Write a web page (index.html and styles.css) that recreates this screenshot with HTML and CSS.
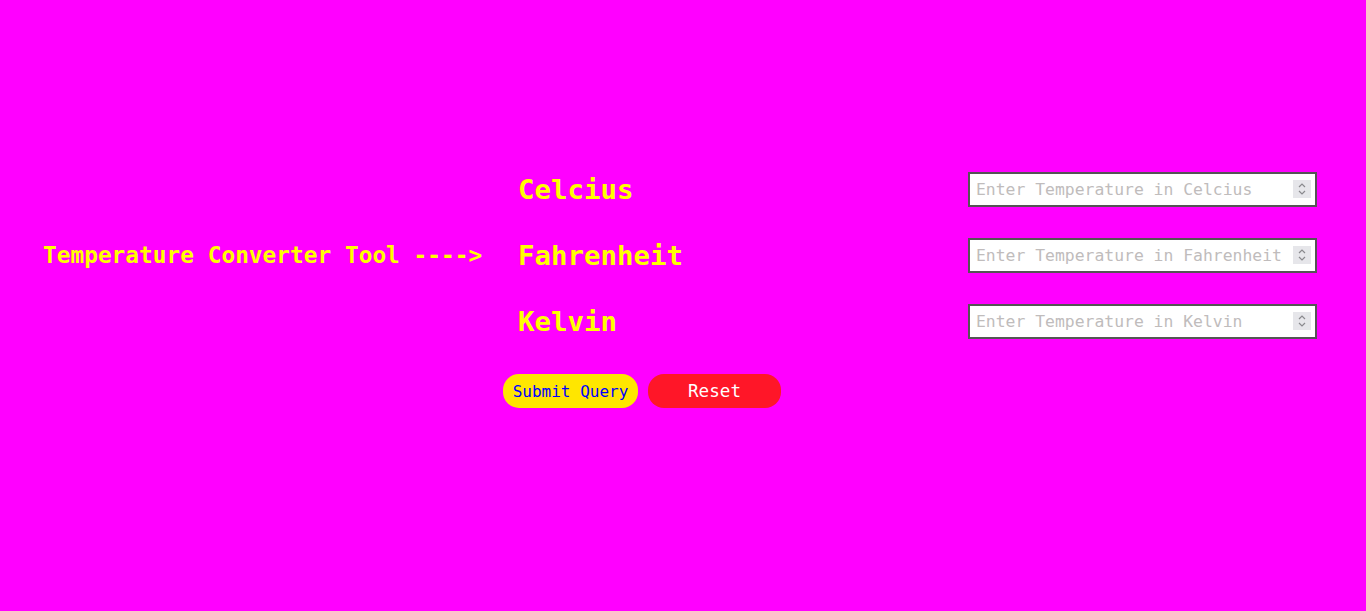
FILE: index.html
```html
<!DOCTYPE html>
<html>
<head>
<meta charset="utf-8">
<title>Temperature Converter</title>
<link rel="stylesheet" href="styles.css">
</head>
<body>
<main class="layout">
  <h1 class="title">Temperature Converter Tool ----&gt;</h1>
  <form class="form">
    <div class="row">
      <label class="label" for="c">Celcius</label>
      <span class="field-wrap">
        <input class="field" id="c" type="number" placeholder="Enter Temperature in Celcius">
        <span class="spin"><svg width="10" height="14" viewBox="0 0 10 14"><path d="M2 5 L5 2 L8 5 M2 9 L5 12 L8 9" fill="none" stroke="#8a8a8e" stroke-width="1.2"/></svg></span>
      </span>
    </div>
    <div class="row">
      <label class="label" for="f">Fahrenheit</label>
      <span class="field-wrap">
        <input class="field" id="f" type="number" placeholder="Enter Temperature in Fahrenheit">
        <span class="spin"><svg width="10" height="14" viewBox="0 0 10 14"><path d="M2 5 L5 2 L8 5 M2 9 L5 12 L8 9" fill="none" stroke="#8a8a8e" stroke-width="1.2"/></svg></span>
      </span>
    </div>
    <div class="row">
      <label class="label" for="k">Kelvin</label>
      <span class="field-wrap">
        <input class="field" id="k" type="number" placeholder="Enter Temperature in Kelvin">
        <span class="spin"><svg width="10" height="14" viewBox="0 0 10 14"><path d="M2 5 L5 2 L8 5 M2 9 L5 12 L8 9" fill="none" stroke="#8a8a8e" stroke-width="1.2"/></svg></span>
      </span>
    </div>
    <div class="buttons">
      <button class="btn submit" type="button">Submit Query</button>
      <button class="btn reset" type="reset">Reset</button>
    </div>
  </form>
</main>
</body>
</html>
```
FILE: styles.css
```css
html, body {
  margin: 0;
  padding: 0;
}
body {
  background: #ff00ff;
  font-family: "DejaVu Sans Mono", "Liberation Mono", monospace;
  height: 611px;
}
.layout {
  display: grid;
  grid-template-columns: 503px 814px;
  padding-top: 172px;
  align-items: start;
}
.title {
  margin: 66px 0 0 0;
  padding-left: 43px;
  font-size: 22.8px;
  font-weight: bold;
  color: #ffff00;
  line-height: 34px;
  height: 34px;
  white-space: nowrap;
}
.form {
  display: flex;
  flex-direction: column;
  margin: 0;
}
.row {
  display: flex;
  justify-content: space-between;
  align-items: center;
  height: 35px;
  margin-bottom: 31px;
}
.label {
  padding-left: 15px;
  font-size: 27.4px;
  font-weight: bold;
  color: #ffff00;
}
.field-wrap {
  position: relative;
  display: block;
  width: 349px;
  height: 35px;
}
.field {
  box-sizing: border-box;
  width: 349px;
  height: 35px;
  border: 2px solid #555;
  background: #fff;
  font-family: "DejaVu Sans Mono", "Liberation Mono", monospace;
  font-size: 16.4px;
  padding: 0 30px 0 6px;
  outline: none;
  -moz-appearance: textfield;
}
.field::placeholder {
  color: #c0bcbc;
}
.field::-webkit-inner-spin-button,
.field::-webkit-outer-spin-button {
  -webkit-appearance: none;
  margin: 0;
}
.spin {
  position: absolute;
  top: 8px;
  right: 6px;
  width: 18px;
  height: 18px;
  background: #e6e6ea;
  display: flex;
  align-items: center;
  justify-content: center;
  pointer-events: none;
}
.buttons {
  display: flex;
  gap: 10px;
  margin-top: 4px;
}
.btn {
  box-sizing: border-box;
  height: 34px;
  border: none;
  border-radius: 16px;
  font-family: "DejaVu Sans Mono", "Liberation Mono", monospace;
  font-size: 16px;
  padding: 0;
}
.submit {
  width: 135px;
  background: #ffe600;
  color: #0000ff;
}
.reset {
  width: 133px;
  background: #ff1628;
  color: #ffffff;
  font-size: 17.6px;
}
```
